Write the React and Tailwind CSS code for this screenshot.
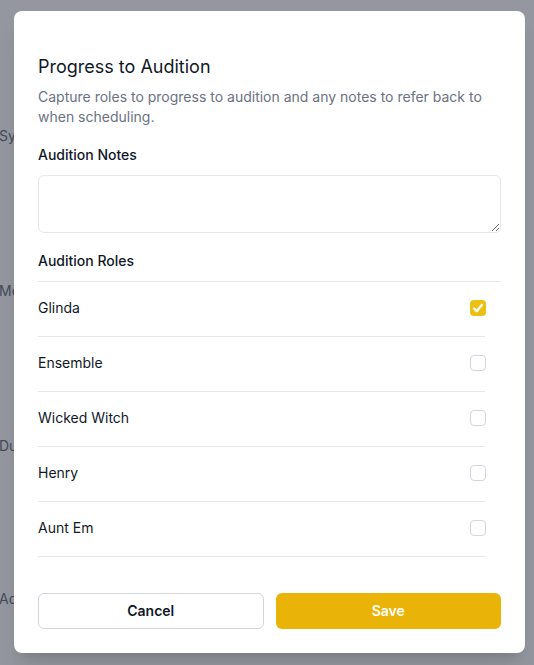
import { useState } from 'react';

const roles = ['Glinda', 'Ensemble', 'Wicked Witch', 'Henry', 'Aunt Em'];

export default function App() {
  const [notes, setNotes] = useState('');
  const [selected, setSelected] = useState(['Glinda']);

  const toggle = (role) => {
    setSelected(selected.includes(role) ? selected.filter((r) => r !== role) : [...selected, role]);
  };

  return (
    <div className="relative h-[665px] w-[534px] overflow-hidden bg-white font-['Inter',sans-serif]">
      {/* page behind the dialog */}
      <div className="flex flex-col pl-0 pt-[126px] text-sm text-gray-600">
        <p className="h-[155px] -ml-[1px]">Synopsis</p>
        <p className="h-[155px] -ml-[1px]">Meeting</p>
        <p className="h-[153px] -ml-[1px]">Duration</p>
        <p className="-ml-[1px]">Address</p>
      </div>

      {/* overlay */}
      <div className="absolute inset-0 bg-[#3c4250]/55" />

      {/* dialog */}
      <div className="absolute left-[14px] top-[11px] w-[511px] rounded-lg bg-white px-6 pt-[42px] pb-6 shadow-xl">
        <h2 className="text-lg leading-7 font-normal text-gray-900">Progress to Audition</h2>
        <p className="mt-1.5 text-sm leading-5 text-gray-500">
          Capture roles to progress to audition and any notes to refer back to when scheduling.
        </p>

        <label className="mt-[18px] block text-sm leading-5 font-medium text-gray-900">Audition Notes</label>
        <textarea
          className="mt-2.5 block h-[58px] w-full rounded-md border border-gray-200 px-3 py-2 text-sm outline-none"
          value={notes}
          onChange={(e) => setNotes(e.target.value)}
        />

        <h3 className="mt-[18px] text-sm leading-5 font-medium text-gray-900">Audition Roles</h3>
        <div className="mt-2.5 border-t border-gray-200">
          {roles.map((role) => {
            const on = selected.includes(role);
            return (
              <div
                key={role}
                className="mr-4 flex h-[55px] items-center justify-between border-b border-gray-200 pb-0.5 text-sm text-gray-900"
                onClick={() => toggle(role)}
              >
                <span>{role}</span>
                {on ? (
                  <span className="-mr-px flex h-4 w-4 items-center justify-center rounded bg-[#ebc012]">
                    <svg viewBox="0 0 16 16" className="h-[14px] w-[14px]" fill="none" stroke="white" strokeWidth="2.6" strokeLinecap="round" strokeLinejoin="round">
                      <path d="M3.5 8.5l3 3.2 6-7.4" />
                    </svg>
                  </span>
                ) : (
                  <span className="-mr-px h-4 w-4 rounded border border-gray-300 bg-white" />
                )}
              </div>
            );
          })}
        </div>

        <div className="mt-9 grid grid-cols-2 gap-3">
          <button className="h-9 rounded-md border border-gray-300 bg-white text-sm font-semibold text-gray-900">Cancel</button>
          <button className="h-9 rounded-md bg-[#eab308] text-sm font-semibold text-white">Save</button>
        </div>
      </div>
    </div>
  );
}
